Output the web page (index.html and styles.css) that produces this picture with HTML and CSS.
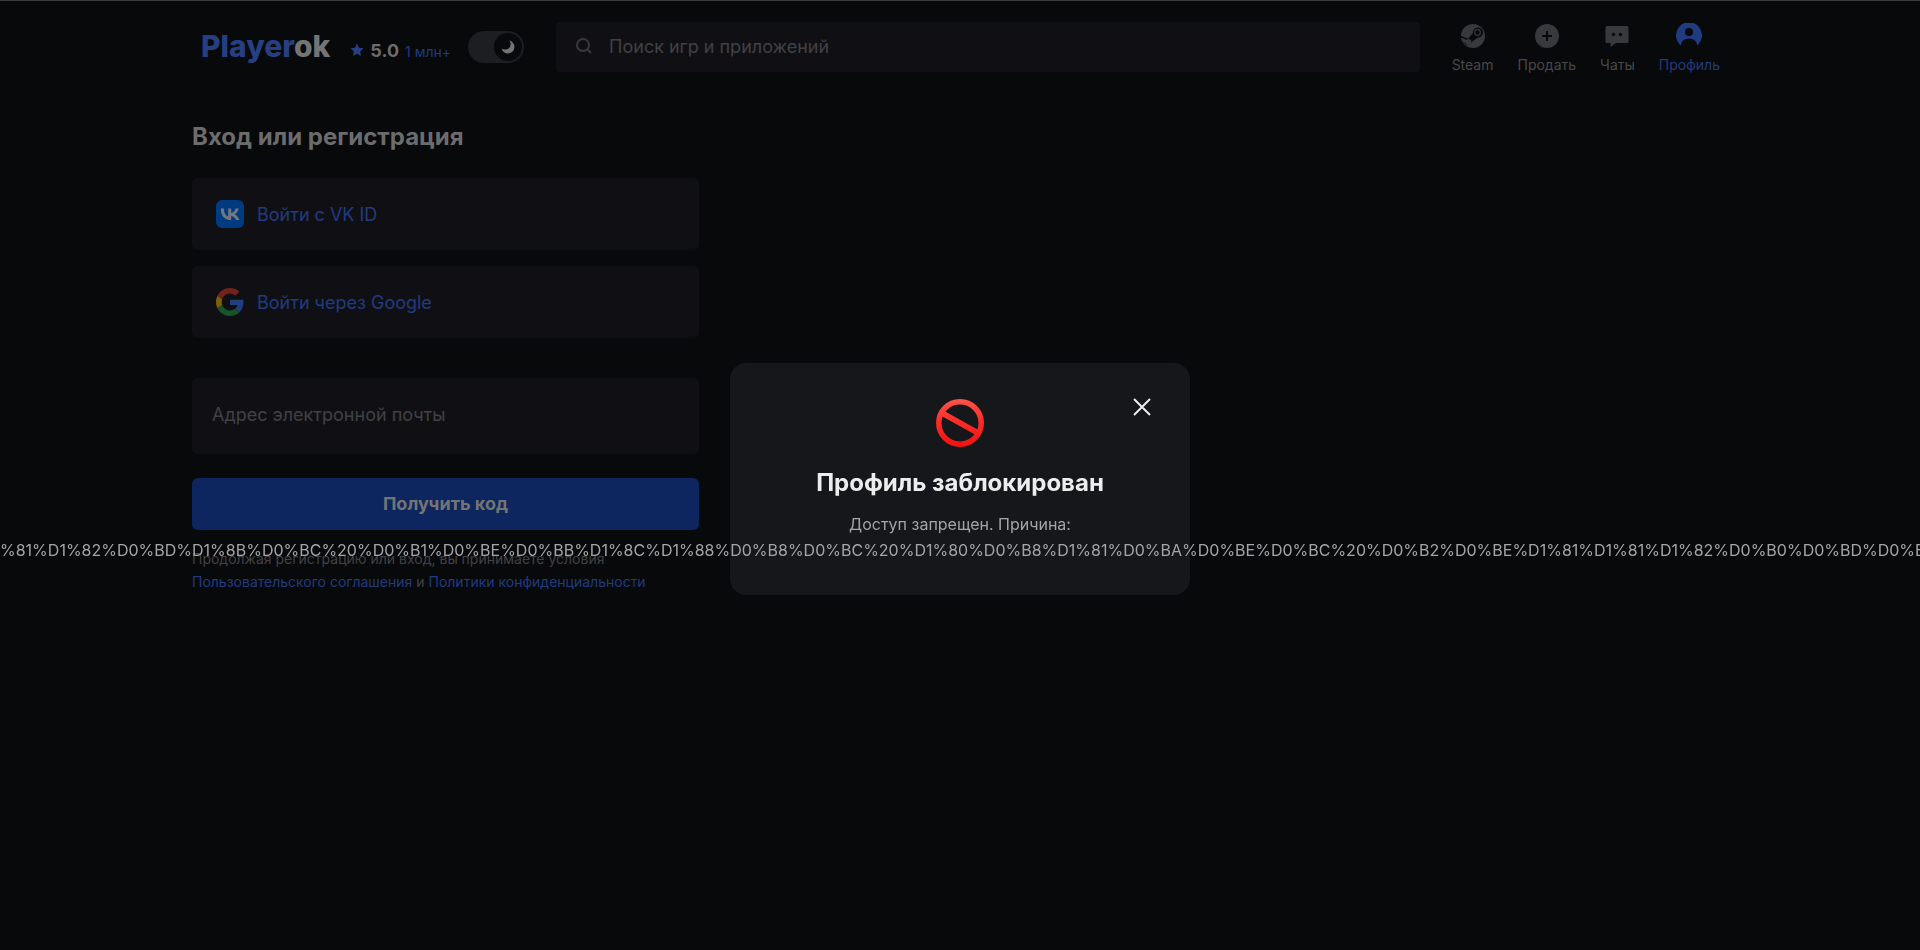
FILE: index.html
```html
<!DOCTYPE html>
<html lang="ru">
<head>
  <meta charset="UTF-8">
  <meta name="viewport" content="width=device-width, initial-scale=1.0">
  <title>Playerok</title>
  <link rel="stylesheet" href="styles.css">
</head>
<body>
  <header class="header">
    <a class="logo" href="#"><span class="logo-blue">Player</span>ok</a>
    <div class="rating">
      <svg class="star" viewBox="0 0 14 14"><path d="M7 0.5l1.9 4.3 4.6.5-3.4 3.1.9 4.6L7 10.7 3 13l.9-4.6L.5 5.3l4.6-.5z"/></svg>
      <b>5.0</b>
      <a href="#">1 млн+</a>
    </div>
    <label class="theme">
      <input type="checkbox" checked aria-label="Тёмная тема">
      <span class="thumb">
        <svg viewBox="0 0 14 14"><path d="M8.2.6a6.5 6.5 0 1 1-7.6 7.8 5 5 0 0 0 3.3 1.1A5.3 5.3 0 0 0 8.2.6z"/></svg>
      </span>
    </label>
    <label class="search">
      <svg viewBox="0 0 16 16"><circle cx="7" cy="7" r="6"/><path d="M11.5 11.5L15 15"/></svg>
      <input type="search" placeholder="Поиск игр и приложений" aria-label="Поиск">
    </label>
    <nav class="menu">
      <a href="#">
        <svg viewBox="0 0 26 26">
          <circle cx="13" cy="13" r="12"/>
          <path class="cut" d="M0 12.5l8 3.2 5-5.7a5 5 0 1 1 5 4.5l-6 4.3a4 4 0 0 1-7.5 1L1 18z"/>
          <circle cx="17.5" cy="9.5" r="3.4"/>
          <circle class="cut" cx="17.5" cy="9.5" r="2.2"/>
          <path d="M1 14.5l5.5 2.3a3 3 0 1 1-.8 3.2L2 18.5z"/>
        </svg>
        <span>Steam</span>
      </a>
      <a href="#">
        <svg viewBox="0 0 26 26"><circle cx="13" cy="13" r="12"/><path class="line" d="M13 8v10M8 13h10"/></svg>
        <span>Продать</span>
      </a>
      <a href="#">
        <svg viewBox="0 0 26 26"><path d="M3 3h20a1.500 1.500 0 0 1 1.500 1.500v14a1.500 1.500 0 0 1-1.500 1.500H12l-5.500 4v-4H3a1.500 1.500 0 0 1-1.500-1.500v-14A1.500 1.500 0 0 1 3 3z"/><circle class="cut" cx="9.500" cy="11.500" r="1.700"/><circle class="cut" cx="16.500" cy="11.500" r="1.700"/></svg>
        <span>Чаты</span>
      </a>
      <a class="active" href="#">
        <svg viewBox="0 0 26 26"><path d="M5 22.500a13 13 0 1 1 16 0c0-4-3-7-8-7s-8 3-8 7z"/><circle class="cut" cx="13" cy="9" r="4"/></svg>
        <span>Профиль</span>
      </a>
    </nav>
  </header>

  <main class="content">
    <h1>Вход или регистрация</h1>
    <form class="login">
      <a class="social" href="#">
        <svg viewBox="0 0 28 28"><rect width="28" height="28" rx="6" fill="#003a80"/><path fill="#74777b" d="M14.900 20.100C8.500 20.100 4.900 15.800 4.700 8.500h3.200c.1 5.300 2.500 7.600 4.300 8V8.500h3v4.600c1.900-.2 3.800-2.300 4.500-4.600h3c-.5 2.900-2.600 4.900-4.100 5.800 1.500.7 3.900 2.500 4.800 5.800h-3.300c-.7-2.200-2.500-3.900-4.900-4.200v4.200z"/></svg>
        Войти с VK ID
      </a>
      <a class="social" href="#">
        <svg viewBox="0 0 48 48">
          <path fill="#74211b" d="M24 9.500c3.540 0 6.710 1.220 9.210 3.600l6.850-6.850C35.900 2.380 30.470 0 24 0 14.620 0 6.510 5.380 2.560 13.220l7.980 6.190C12.430 13.720 17.740 9.500 24 9.500z"/>
          <path fill="#213f7c" d="M46.980 24.550c0-1.570-.15-3.090-.38-4.550H24v9.020h12.940c-.58 2.960-2.260 5.480-4.780 7.180l7.730 6c4.510-4.180 7.090-10.360 7.090-17.650z"/>
          <path fill="#7c6005" d="M10.530 28.590c-.48-1.450-.76-2.990-.76-4.590s.27-3.140.76-4.590l-7.980-6.190C.92 16.460 0 20.120 0 24s.92 7.540 2.560 10.780l7.970-6.190z"/>
          <path fill="#195329" d="M24 48c6.480 0 11.930-2.130 15.890-5.810l-7.730-6c-2.150 1.450-4.920 2.300-8.160 2.300-6.260 0-11.570-4.220-13.470-9.910l-7.980 6.190C6.510 42.620 14.620 48 24 48z"/>
        </svg>
        Войти через Google
      </a>
      <input class="email" type="email" placeholder="Адрес электронной почты" aria-label="Адрес электронной почты">
      <button class="submit" type="button">Получить код</button>
      <p class="terms">Продолжая регистрацию или вход, вы принимаете условия<br><a href="#">Пользовательского соглашения</a> и <a href="#">Политики конфиденциальности</a></p>
    </form>
  </main>

  <div class="overlay">
    <div class="modal" role="dialog" aria-modal="true" aria-labelledby="modal-title">
      <button class="close" type="button" aria-label="Закрыть">
        <svg viewBox="0 0 18 18"><path d="M1 1l16 16M17 1L1 17"/></svg>
      </button>
      <svg class="ban" viewBox="0 0 48 48">
        <defs>
          <linearGradient id="red" x1="0" y1="0" x2="0" y2="48" gradientUnits="userSpaceOnUse">
            <stop offset="0" stop-color="#ff544b"/>
            <stop offset="0.5" stop-color="#fb2a24"/>
            <stop offset="1" stop-color="#f01212"/>
          </linearGradient>
        </defs>
        <g fill="none" stroke="url(#red)" stroke-width="5.500"><circle cx="24" cy="24" r="21.250"/><path d="M6 14l36 20"/></g>
      </svg>
      <h2 id="modal-title">Профиль заблокирован</h2>
      <p>Доступ запрещен. Причина:</p>
      <p class="reason">%81%D1%82%D0%BD%D1%8B%D0%BC%20%D0%B1%D0%BE%D0%BB%D1%8C%D1%88%D0%B8%D0%BC%20%D1%80%D0%B8%D1%81%D0%BA%D0%BE%D0%BC%20%D0%B2%D0%BE%D1%81%D1%81%D1%82%D0%B0%D0%BD%D0%BE</p>
    </div>
  </div>
</body>
</html>
```
FILE: styles.css
```css
* {
  box-sizing: border-box;
}

body {
  margin: 0;
  min-height: 100vh;
  border-top: 1px solid #3a3b3c;
  background: #08090b;
  color: #6c6c6d;
  font-family: Inter, "Noto Sans", sans-serif;
  font-size: 18px;
  overflow-x: hidden;
}

a {
  color: #213b80;
  text-decoration: none;
}

input,
button {
  font: inherit;
  border: 0;
}

.header {
  display: flex;
  align-items: center;
  max-width: 1536px;
  height: 92px;
  margin: 0 auto;
  padding: 0 8px;
}

.logo {
  padding: 0 0 2px 1px;
  color: #747475;
  font-size: 30px;
  font-weight: 800;
}

.logo-blue {
  color: #263f83;
}

.rating {
  display: flex;
  align-items: baseline;
  gap: 6px;
  margin: 6px 17px 0 20px;
}

.rating a {
  font-size: 14px;
}

.star {
  width: 14px;
  height: 14px;
  fill: #263f83;
}

.theme {
  display: grid;
  align-items: center;
  justify-items: end;
}

.theme input {
  grid-area: 1 / 1;
  appearance: none;
  width: 56px;
  height: 32px;
  margin: 0;
  border-radius: 16px;
  background: #1d1e22;
}

.thumb {
  grid-area: 1 / 1;
  display: grid;
  place-items: center;
  width: 28px;
  height: 28px;
  margin-right: 2px;
  border-radius: 50%;
  background: #08090b;
}

.thumb svg {
  width: 14px;
  height: 14px;
  fill: #747475;
}

.search {
  display: flex;
  flex: 1;
  align-items: center;
  gap: 17px;
  height: 50px;
  margin: 0 32px;
  padding: 0 20px 2px;
  border-radius: 4px;
  background: #101014;
}

.search svg {
  width: 16px;
  height: 16px;
  fill: none;
  stroke: #38393c;
  stroke-width: 2;
}

.search input {
  flex: 1;
  padding: 0;
  background: none;
  color: #747475;
}

input::placeholder {
  color: #414145;
  opacity: 1;
}

.menu {
  display: flex;
  gap: 24px;
  padding-top: 4px;
}

.menu a {
  display: flex;
  flex-direction: column;
  align-items: center;
  gap: 6px;
  color: #47484a;
  font-size: 14px;
  line-height: 20px;
}

.menu svg {
  width: 26px;
  height: 26px;
  fill: #38393c;
}

.menu .cut {
  fill: #08090b;
}

.menu .line {
  stroke: #08090b;
  stroke-width: 2;
}

.menu .active {
  color: #213b80;
}

.menu .active svg {
  fill: #213b80;
}

.content {
  max-width: 1536px;
  margin: 0 auto;
}

h1 {
  margin: 28px 0 25px;
  font-size: 24px;
  line-height: 32px;
}

.login {
  display: flex;
  flex-direction: column;
  width: 33%;
}

.social {
  display: flex;
  align-items: center;
  gap: 13px;
  height: 72px;
  margin-bottom: 16px;
  padding: 0 24px;
  border-radius: 6px;
  background: #101014;
}

.social svg {
  width: 28px;
  height: 28px;
}

.email {
  height: 76px;
  margin-top: 24px;
  padding: 0 20px 4px;
  border-radius: 6px;
  background: #101014;
  color: #747475;
}

.submit {
  height: 52px;
  margin-top: 24px;
  padding-bottom: 2px;
  border-radius: 6px;
  background: #0e265f;
  color: #747475;
  font-weight: bold;
}

.terms {
  margin: 17px 0 0;
  color: #414145;
  font-size: 14px;
  line-height: 23px;
}

.overlay {
  position: fixed;
  inset: 0;
  display: grid;
  place-items: center;
  padding-top: 8px;
}

.modal {
  position: relative;
  display: flex;
  flex-direction: column;
  align-items: center;
  width: 460px;
  padding: 36px 0 32px;
  border-radius: 16px;
  background: #16171a;
  color: #a4a4a7;
  font-size: 16px;
  line-height: 26px;
}

.close {
  position: absolute;
  top: 32px;
  right: 36px;
  padding: 3px;
  background: none;
  line-height: 0;
}

.close svg {
  width: 18px;
  height: 18px;
  stroke: #ededee;
  stroke-width: 2;
}

.ban {
  width: 48px;
  height: 48px;
}

.modal h2 {
  margin: 20px 0 12px;
  color: #ededee;
  font-size: 24px;
  line-height: 32px;
}

.modal p {
  margin: 0;
}

.reason {
  width: 100vw;
  overflow: hidden;
  white-space: nowrap;
}
```
